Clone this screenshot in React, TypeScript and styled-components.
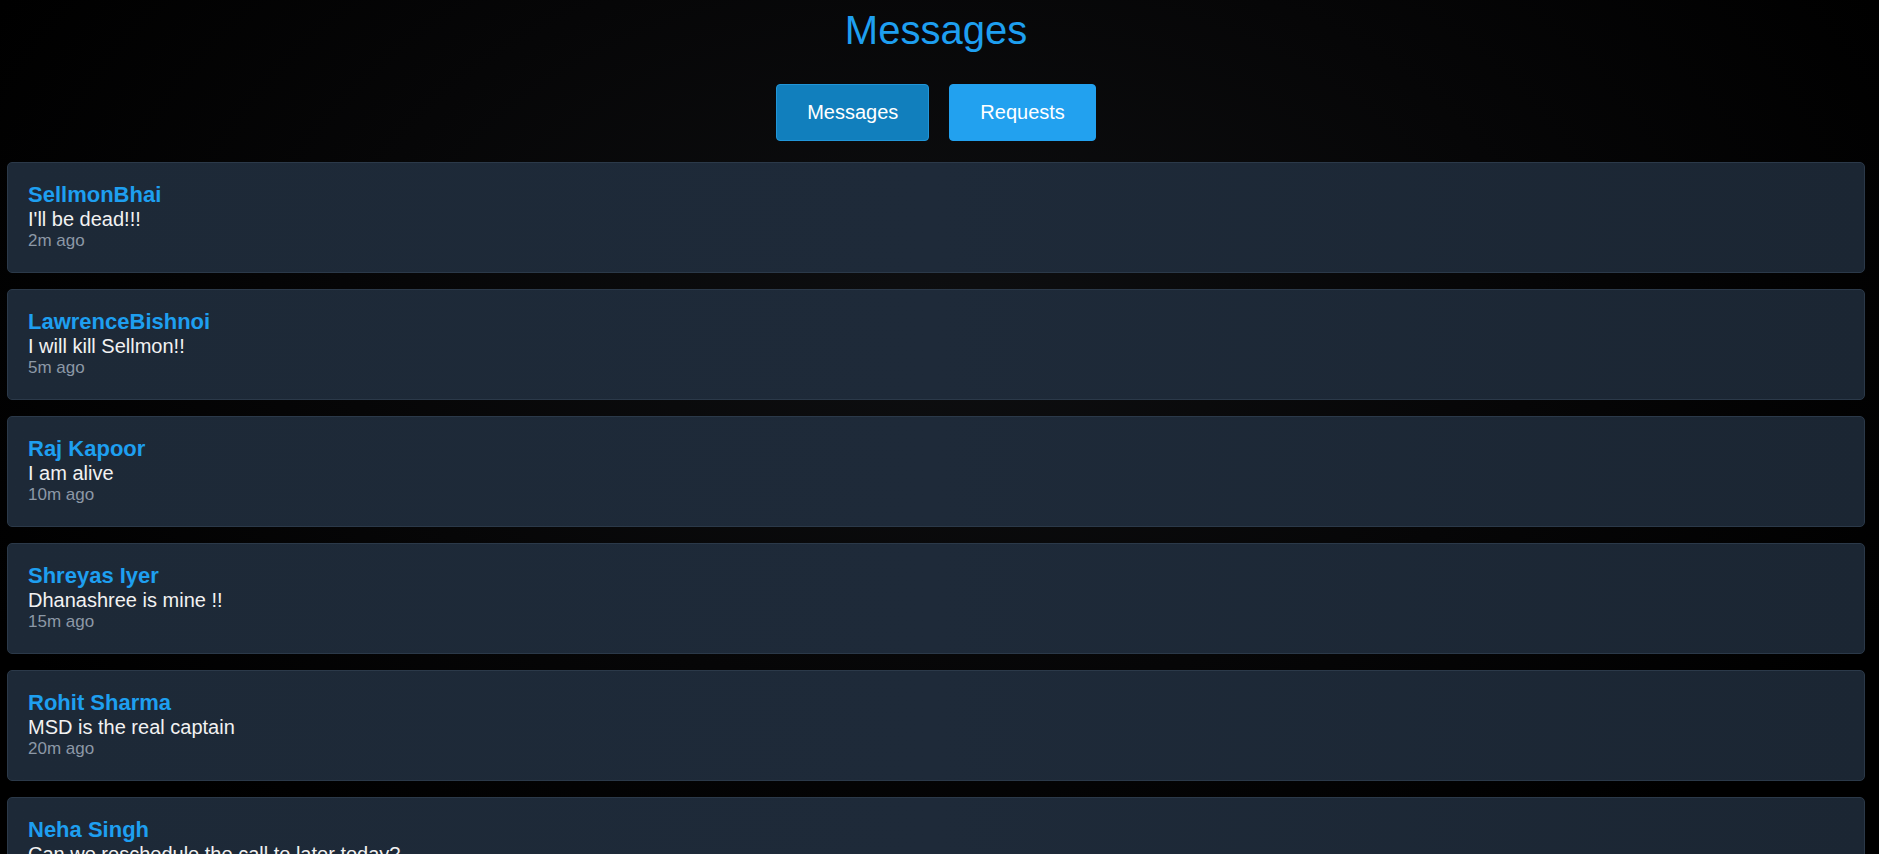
import React, { useState } from "react";
import styled, { createGlobalStyle } from "styled-components";

const GlobalStyle = createGlobalStyle`
  html, body {
    margin: 0;
    padding: 0;
    background: #000;
  }
  body {
    font-family: "Liberation Sans", Arial, sans-serif;
    color: #f1f1f1;
  }
`;

const Page = styled.div`
  min-height: 854px;
  box-sizing: border-box;
  padding: 8px 14px 0 7px;
  background: radial-gradient(ellipse at 50% 35%, #0e0f11 0%, #060607 45%, #000 80%);
`;

const Title = styled.h1`
  margin: 0;
  text-align: center;
  font-size: 40px;
  font-weight: 400;
  line-height: normal;
  color: #1e9ff0;
`;

const Tabs = styled.div`
  display: flex;
  justify-content: center;
  gap: 20px;
  margin-top: 31px;
  margin-bottom: 21px;
`;

const TabButton = styled.button<{ $active?: boolean }>`
  font-family: "Liberation Sans", Arial, sans-serif;
  font-size: 20px;
  line-height: normal;
  padding: 16px 30px;
  border-radius: 4px;
  cursor: pointer;
  color: #fff;
  border: 1px solid ${(p) => (p.$active ? "#2196d9" : "#22a1ef")};
  background: ${(p) => (p.$active ? "#117fbd" : "#22a1ef")};
`;

const List = styled.div`
  display: flex;
  flex-direction: column;
  gap: 16px;
`;

const Card = styled.div`
  background: linear-gradient(90deg, #1d2937 0%, #1e2a39 50%, #1b2633 100%);
  border: 1px solid #2b3949;
  border-radius: 5px;
  padding: 19px 20px 21px;
`;

const Name = styled.div`
  font-size: 22px;
  font-weight: 700;
  color: #1e9ff0;
`;

const Text = styled.div`
  font-size: 20px;
  color: #f2f2f2;
`;

const Time = styled.div`
  font-size: 17px;
  color: #8c98a6;
`;

const messages = [
  { name: "SellmonBhai", text: "I'll be dead!!!", time: "2m ago" },
  { name: "LawrenceBishnoi", text: "I will kill Sellmon!!", time: "5m ago" },
  { name: "Raj Kapoor", text: "I am alive", time: "10m ago" },
  { name: "Shreyas Iyer", text: "Dhanashree is mine !!", time: "15m ago" },
  { name: "Rohit Sharma", text: "MSD is the real captain", time: "20m ago" },
  { name: "Neha Singh", text: "Can we reschedule the call to later today?", time: "30m ago" },
];

export default function App() {
  const [tab, setTab] = useState<"messages" | "requests">("messages");
  return (
    <>
      <GlobalStyle />
      <Page>
        <Title>Messages</Title>
        <Tabs>
          <TabButton $active={tab === "messages"} onClick={() => setTab("messages")}>
            Messages
          </TabButton>
          <TabButton $active={tab === "requests"} onClick={() => setTab("requests")}>
            Requests
          </TabButton>
        </Tabs>
        <List>
          {messages.map((m) => (
            <Card key={m.name}>
              <Name>{m.name}</Name>
              <Text>{m.text}</Text>
              <Time>{m.time}</Time>
            </Card>
          ))}
        </List>
      </Page>
    </>
  );
}
